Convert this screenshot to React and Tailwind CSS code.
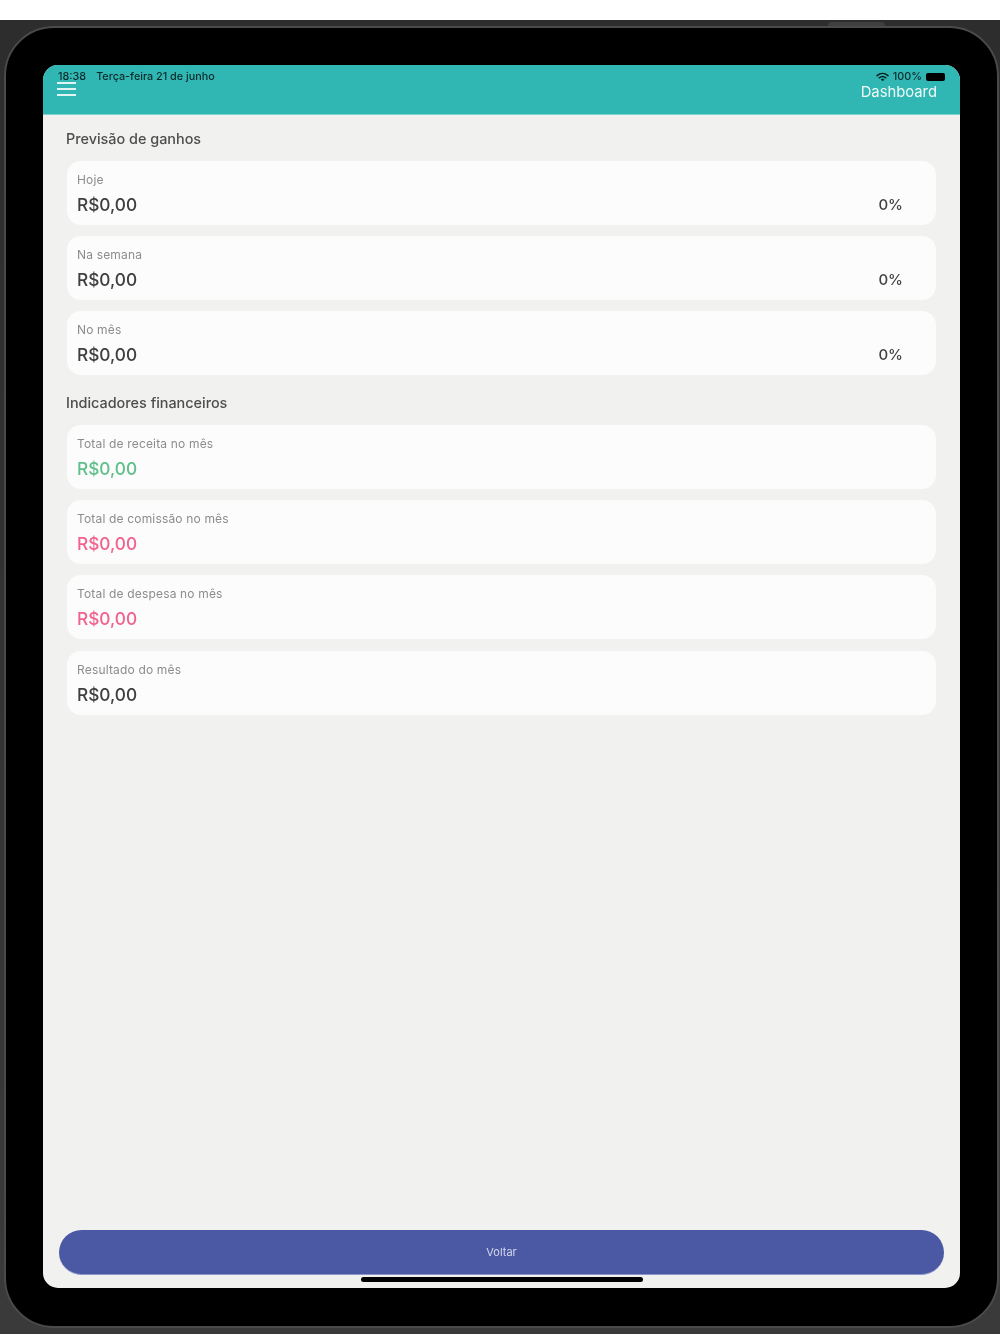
const font = { fontFamily: 'Inter, "Noto Sans", sans-serif' };

function Card({ label, value, percent, valueClass = 'text-[#3f3f3f]' }) {
  return (
    <div className="flex h-16 flex-col rounded-[14px] bg-[#fcfcfc] pl-[10px] pr-[33px] pt-[11px]">
      <div className="text-[12px] leading-[16px] tracking-[0.17px] text-[#8c8c8c]">{label}</div>
      <div className="mt-[5px] flex items-center justify-between">
        <span className={`text-[17.300px] font-medium leading-[24px] ${valueClass}`}>{value}</span>
        {percent ? <span className="text-[15px] font-medium leading-[24px] text-[#3f3f3f]">{percent}</span> : null}
      </div>
    </div>
  );
}

function Section({ title, children, className = '', gap = 'gap-[11px]' }) {
  return (
    <section className={className}>
      <h2 className="pl-[23px] text-[14.400px] font-medium leading-5 text-[#4d4d4d]">{title}</h2>
      <div className={`mt-[12px] flex flex-col pl-[24px] pr-[24px] ${gap}`}>{children}</div>
    </section>
  );
}

export default function App() {
  return (
    <div className="h-[1334px] w-[1000px] overflow-hidden bg-white" style={font}>
      <div className="mt-5 h-[1314px] bg-gradient-to-b from-[#2d2d2d] via-[#333333] to-[#3a3a3a] pl-[4px] pt-[6px]">
        <div className="relative h-[1302px] w-[995px] rounded-[50px] border-2 border-[#4a4a4a] bg-black pb-[37px] pl-[37px] pr-[37px] pt-[37px] blur-[0.5px]">
          <div className="absolute right-[112px] top-[-6px] h-1 w-[57px] rounded-t bg-[#3f3f3f]" />
          <div className="relative flex h-[1223px] flex-col overflow-hidden rounded-[15px] bg-[#f1f1f0]">
            <header className="relative h-[50px] shrink-0 border-b border-[#7fd4cf] bg-[#31b7b3]">
              <div className="flex items-center justify-between pl-[15px] pr-[15px] pt-[6px] text-[10.800px] font-medium leading-[11px] text-[#0c2a2a]">
                <div className="flex gap-[10px]">
                  <span>18:38</span>
                  <span>Terça-feira 21 de junho</span>
                </div>
                <div className="flex items-center gap-[4px]">
                  <svg width="13" height="10" viewBox="0 0 24 18" fill="none" stroke="#06201f" strokeWidth="2.8" strokeLinecap="round">
                    <path d="M2 6.5C8 1 16 1 22 6.5" />
                    <path d="M6 10.5C9.500 7.500 14.500 7.500 18 10.500" />
                    <path d="M12 16L9.500 13.500C11 12.500 13 12.500 14.500 13.500Z" fill="#06201f" strokeWidth="1" />
                  </svg>
                  <span>100%</span>
                  <span className="h-[8px] w-[19px] rounded-[2px] bg-black" />
                </div>
              </div>
              <div className="flex items-start justify-between pl-[14px] pr-[23px]">
                <div className="flex w-[19px] flex-col gap-[4px]">
                  <span className="h-[2px] bg-white/85" />
                  <span className="h-[2px] bg-white/85" />
                  <span className="h-[2px] bg-white/85" />
                </div>
                <span className="mt-[1px] text-[14.800px] leading-[18px] text-[#eef9f8]">Dashboard</span>
              </div>
            </header>
            <main className="flex-1 pt-[14px]">
              <Section title="Previsão de ganhos">
                <Card label="Hoje" value="R$0,00" percent="0%" />
                <Card label="Na semana" value="R$0,00" percent="0%" />
                <Card label="No mês" value="R$0,00" percent="0%" />
              </Section>
              <Section title="Indicadores financeiros" className="mt-[18px]" gap="gap-[11.200px]">
                <Card label="Total de receita no mês" value="R$0,00" valueClass="text-[#5fc08a]" />
                <Card label="Total de comissão no mês" value="R$0,00" valueClass="text-[#f2628f]" />
                <Card label="Total de despesa no mês" value="R$0,00" valueClass="text-[#f2628f]" />
                <Card label="Resultado do mês" value="R$0,00" />
              </Section>
            </main>
            <div className="shrink-0 pb-[13px] pl-[16px] pr-[16px]">
              <button className="flex h-[45px] w-full items-center justify-center rounded-[23px] border-b border-[#8e96c8] bg-[#4b58a3] text-[11px] text-[#d5d8ec]">
                Voltar
              </button>
            </div>
            <div className="absolute bottom-[6px] left-[318px] h-[5px] w-[282px] rounded-full bg-black" />
          </div>
        </div>
      </div>
    </div>
  );
}
